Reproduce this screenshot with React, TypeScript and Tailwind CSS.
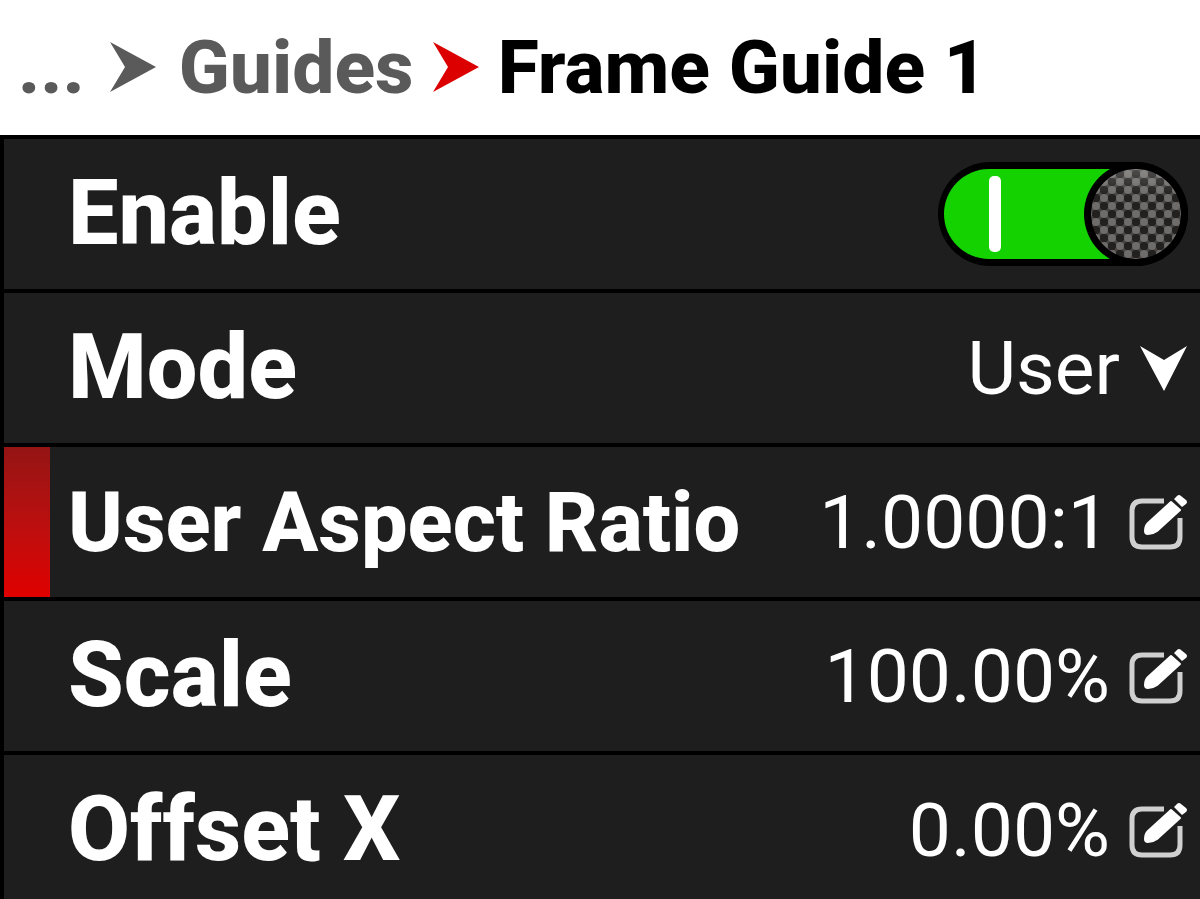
import { useState } from "react";

const FIELDS = [
    { id: "aspect", label: "User Aspect Ratio", value: "1.0000:1", size: "text-[83px]" },
    { id: "scale", label: "Scale", value: "100.00%", size: "text-[90px]" },
    { id: "offset-x", label: "Offset X", value: "0.00%", size: "text-[90px]" },
];

function Arrow({ className }: { className: string }) {
    return (
        <svg viewBox="0 0 48 52" className={`h-[52px] w-12 shrink-0 ${className}`} fill="currentColor" aria-hidden="true">
            <path d="M1 0 47 25 1 50 16 25Z" />
        </svg>
    );
}

function EditIcon() {
    return (
        <svg viewBox="0 0 60 62" className="h-[62px] w-[60px]" fill="none" aria-hidden="true">
            <path d="M36 10H14Q4 10 4 20V46Q4 56 14 56H42Q52 56 52 46V27" stroke="#d0d0d0" strokeWidth="5" />
            <path d="M43 11 52 19 29 40Q25 43 20 43Q17 43 17 40Q17 35 20 32Z" fill="#fff" stroke="#fff" strokeWidth="2" strokeLinejoin="round" />
            <path d="M46 8 49 5Q51 3 53 5L58 9Q60 11 58 13L54 16Z" fill="#fff" />
        </svg>
    );
}

function Toggle({ checked, onChange }: { checked: boolean; onChange: (v: boolean) => void }) {
    return (
        <span className="relative mr-3 flex shrink-0">
            <svg viewBox="0 0 250 104" className="h-[104px] w-[250px]" aria-hidden="true">
                <defs>
                    <pattern id="grip" width="16" height="16" patternUnits="userSpaceOnUse" x="6" y="4">
                        <rect width="16" height="16" fill="#222120" />
                        <path d="M0 0 16 16M16 0 0 16" stroke="#474543" strokeWidth="3" />
                        <g fill="#6e6b68">
                            <circle cx="8" cy="8" r="4" />
                            <circle cx="0" cy="0" r="4" />
                            <circle cx="16" cy="0" r="4" />
                            <circle cx="0" cy="16" r="4" />
                            <circle cx="16" cy="16" r="4" />
                        </g>
                    </pattern>
                    <linearGradient id="shine" x1="0" y1="0" x2="0" y2="1">
                        <stop offset="0" stopColor="#fff" stopOpacity="0.2" />
                        <stop offset="0.3" stopColor="#fff" stopOpacity="0" />
                    </linearGradient>
                </defs>
                <rect width="250" height="104" rx="52" fill="#000" />
                <rect x="6" y="7" width="238" height="90" rx="45" fill={checked ? "#14d200" : "#555"} />
                {checked && <rect x="51" y="14" width="12" height="76" rx="5" fill="#fff" />}
                <g transform={checked ? undefined : "translate(-146 0)"}>
                    <circle cx="198" cy="52" r="52" fill="#000" />
                    <circle cx="198" cy="52" r="45" fill="url(#grip)" />
                    <circle cx="198" cy="52" r="45" fill="url(#shine)" />
                </g>
            </svg>
            <input id="enable" type="checkbox" role="switch" checked={checked} onChange={e => onChange(e.target.checked)}
                className="absolute inset-0 h-full w-full cursor-pointer appearance-none rounded-full" />
        </span>
    );
}

const ROW = "flex h-[150px] shrink-0 items-center bg-[#1e1e1e]";
const LABEL = "shrink-0 whitespace-nowrap pl-[18px] leading-none font-extrabold";
const VALUE = "text-[75px] leading-none font-normal";

export default function App() {
    const [enabled, setEnabled] = useState(true);
    const [mode, setMode] = useState("User");
    const [values, setValues] = useState(FIELDS.map(f => f.value));
    const [selected, setSelected] = useState("aspect");

    return (
        <div className="flex h-screen flex-col overflow-hidden bg-black font-[Roboto,sans-serif] text-white">
            <nav aria-label="Breadcrumb" className="flex h-[135px] shrink-0 items-center bg-white pl-[18px] text-[75px] leading-none font-extrabold text-[#5a5a5a]">
                <a href="#menu">...</a>
                <Arrow className="mr-[22px] ml-6" />
                <a href="#guides">Guides</a>
                <Arrow className="mx-[18px] text-[#dc0000]" />
                <h1 className="whitespace-nowrap text-black">Frame Guide 1</h1>
            </nav>
            <main className="flex flex-col gap-1 pt-1 pl-1">
                <div className={ROW}>
                    <span className="w-[46px] shrink-0" />
                    <label htmlFor="enable" className={`text-[90px] ${LABEL}`}>Enable</label>
                    <span className="flex-1" />
                    <Toggle checked={enabled} onChange={setEnabled} />
                </div>
                <div className={ROW}>
                    <span className="w-[46px] shrink-0" />
                    <label htmlFor="mode" className={`text-[90px] ${LABEL}`}>Mode</label>
                    <span className="flex-1" />
                    <select id="mode" value={mode} onChange={e => setMode(e.target.value)}
                        className={`h-24 appearance-none bg-transparent outline-none [field-sizing:content] ${VALUE}`}>
                        <option>User</option>
                    </select>
                    <svg viewBox="0 0 48 46" className="mr-3 ml-5 h-[46px] w-12 shrink-0" fill="#fff" aria-hidden="true">
                        <path d="M0 1 24 15 47 1 24 46Z" />
                    </svg>
                </div>
                {FIELDS.map((f, i) => (
                    <div key={f.id} className={ROW}>
                        <span className={`w-[46px] shrink-0 self-stretch ${selected === f.id ? "bg-linear-to-b from-[#951414] to-[#e00000]" : ""}`} />
                        <label htmlFor={f.id} className={`${f.size} ${LABEL}`}>{f.label}</label>
                        <input id={f.id} type="text" value={values[i]}
                            onFocus={() => setSelected(f.id)}
                            onChange={e => setValues(values.map((v, j) => (j === i ? e.target.value : v)))}
                            className={`h-24 w-0 min-w-0 flex-1 bg-transparent text-right outline-none ${VALUE}`} />
                        <button aria-label={`Edit ${f.label}`} onClick={() => document.getElementById(f.id)?.focus()} className="mr-3 ml-[18px] shrink-0">
                            <EditIcon />
                        </button>
                    </div>
                ))}
            </main>
        </div>
    );
}
